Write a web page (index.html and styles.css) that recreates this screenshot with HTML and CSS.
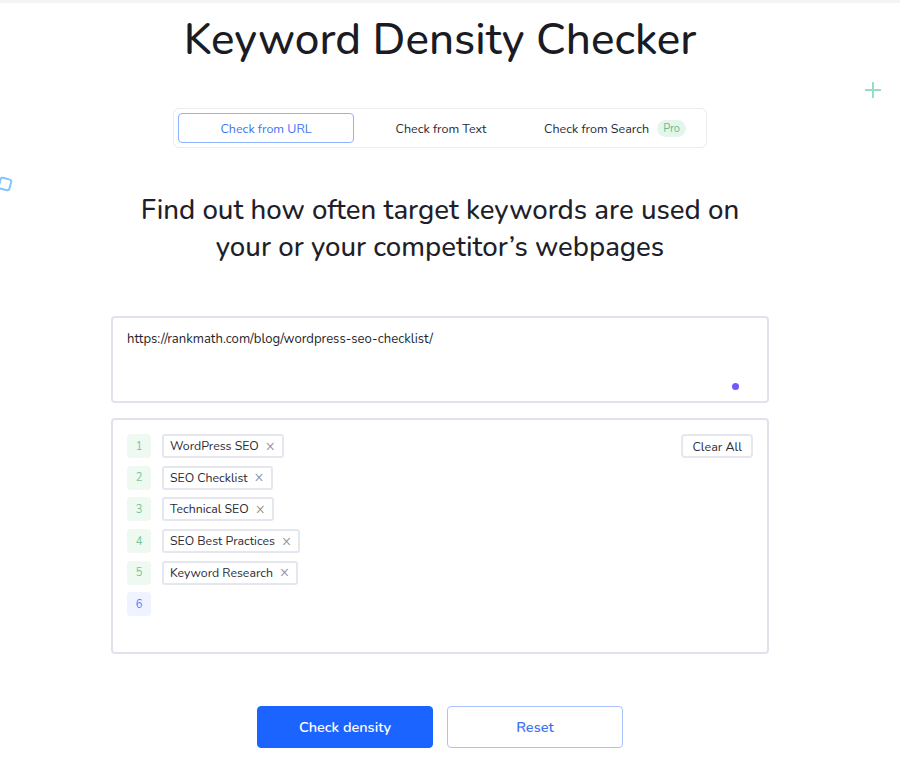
FILE: index.html
```html
<!DOCTYPE html>
<html>
	<head>
		<meta charset="utf-8">
		<title>Keyword Density Checker</title>
		<link rel="stylesheet" href="styles.css">
	</head>
	<body>
		<div id="topbar"></div>

		<!-- decorations -->
		<svg class="deco plus" width="18" height="18" viewBox="0 0 18 18">
			<path d="M9 1v16M1 9h16" stroke="#94dfc4" stroke-width="2" fill="none"/>
		</svg>
		<svg class="deco square" width="16" height="16" viewBox="0 0 16 16">
			<rect x="2.5" y="2.5" width="11" height="11" rx="2" transform="rotate(15 8 8)" stroke="#86c2ff" stroke-width="2" fill="none"/>
		</svg>

		<div id="wrapper">
			<h1 id="title">Keyword Density Checker</h1>

			<div id="tabs">
				<div class="tab active">Check from URL</div>
				<div class="tab">Check from Text</div>
				<div class="tab">Check from Search <span class="pro">Pro</span></div>
			</div>

			<h2 id="subtitle">Find out how often target keywords are used on<br>your or your competitor’s webpages</h2>

			<div id="url_box">
				<p class="url">https://rankmath.com/blog/wordpress-seo-checklist/</p>
				<span class="dot"></span>
			</div>

			<div id="keywords">
				<div class="kw_list">
					<div class="kw_row"><span class="num">1</span><span class="tag">WordPress SEO <i>×</i></span></div>
					<div class="kw_row"><span class="num">2</span><span class="tag">SEO Checklist <i>×</i></span></div>
					<div class="kw_row"><span class="num">3</span><span class="tag">Technical SEO <i>×</i></span></div>
					<div class="kw_row"><span class="num">4</span><span class="tag">SEO Best Practices <i>×</i></span></div>
					<div class="kw_row"><span class="num">5</span><span class="tag">Keyword Research <i>×</i></span></div>
					<div class="kw_row"><span class="num blue">6</span></div>
				</div>
				<button class="clear">Clear All</button>
			</div>

			<div id="actions">
				<button class="btn primary">Check density</button>
				<button class="btn outline">Reset</button>
			</div>
		</div>
	</body>
</html>
```

FILE: styles.css
```css
* {
	padding:0px;
	margin:0px;
	box-sizing:border-box;
}

body {
	background:#ffffff;
	font-family:"Nunito", "Lato", "Open Sans", sans-serif;
	color:#1f1f2b;
	position:relative;
	min-height:766px;
	padding-right:20px;
	overflow:hidden;
}

#topbar {
	height:3px;
	margin-right:-20px;
	background:#f4f4f6;
}

.deco {
	position:absolute;
}
	.plus {
		left:864px;
		top:81px;
	}
	.square {
		left:-3px;
		top:176px;
	}

#wrapper {
	width:658px;
	margin:0 auto;
	display:flex;
	flex-direction:column;
	align-items:center;
}

#title {
	margin-top:11px;
	font-size:44px;
	font-weight:500;
	line-height:52px;
	color:#1b1b24;
}

#tabs {
	margin-top:42px;
	width:534px;
	height:40px;
	padding:4px;
	border:1px solid #ececf1;
	border-radius:6px;
	display:flex;
	align-items:stretch;
}
	.tab {
		flex:1;
		display:flex;
		align-items:center;
		justify-content:center;
		gap:8px;
		font-size:12.5px;
		color:#2a2a35;
		border:1px solid transparent;
		border-radius:4px;
	}
	.tab.active {
		flex:0 0 176px;
		border-color:#8db2ff;
		color:#3f73f2;
	}
	.pro {
		font-size:11px;
		color:#62c08a;
		background:#e4f6ec;
		border-radius:9px;
		padding:1px 6px;
	}

#subtitle {
	margin-top:44px;
	font-size:27.6px;
	font-weight:500;
	line-height:37px;
	text-align:center;
	color:#1f1f2b;
}

#url_box {
	margin-top:50px;
	width:658px;
	height:87px;
	border:2px solid #e2e2ec;
	border-radius:4px;
	padding:12px 14px;
	position:relative;
}
	.url {
		font-size:13.1px;
		color:#1f1f2b;
	}
	.dot {
		position:absolute;
		right:28px;
		bottom:11px;
		width:7px;
		height:7px;
		border-radius:50%;
		background:#7557ff;
	}

#keywords {
	margin-top:15px;
	width:658px;
	height:236px;
	border:2px solid #e2e2ec;
	border-radius:4px;
	padding:14px 14px;
	display:flex;
	justify-content:space-between;
	align-items:flex-start;
}
	.kw_list {
		display:flex;
		flex-direction:column;
		gap:7.7px;
	}
	.kw_row {
		display:flex;
		align-items:center;
		gap:11px;
		height:24px;
	}
	.num {
		width:24px;
		height:24px;
		border-radius:4px;
		background:#eef9f1;
		color:#72c78e;
		font-size:11px;
		display:flex;
		align-items:center;
		justify-content:center;
	}
	.num.blue {
		background:#eef3ff;
		color:#4f7cf5;
	}
	.tag {
		height:24px;
		border:2px solid #e6e6ee;
		border-radius:3px;
		padding:0 7px 0 6px;
		font-size:12.3px;
		color:#2b2b36;
		display:flex;
		align-items:center;
		gap:7px;
	}
	.tag i {
		font-style:normal;
		font-size:15px;
		color:#8a8a96;
		line-height:1;
	}
	.clear {
		height:24px;
		padding:0 9px;
		border:2px solid #e6e6ee;
		border-radius:4px;
		background:#fff;
		font-family:inherit;
		font-size:12.5px;
		color:#2b2b36;
	}

#actions {
	margin-top:52px;
	display:flex;
	gap:14px;
}
	.btn {
		width:176px;
		height:42px;
		border-radius:4px;
		font-family:inherit;
		font-size:14.5px;
		font-weight:600;
	}
	.primary {
		background:#1c64ff;
		border:1px solid #1c64ff;
		color:#ffffff;
	}
	.outline {
		background:#ffffff;
		border:1.5px solid #a9c3ff;
		color:#3f73f2;
	}
```
